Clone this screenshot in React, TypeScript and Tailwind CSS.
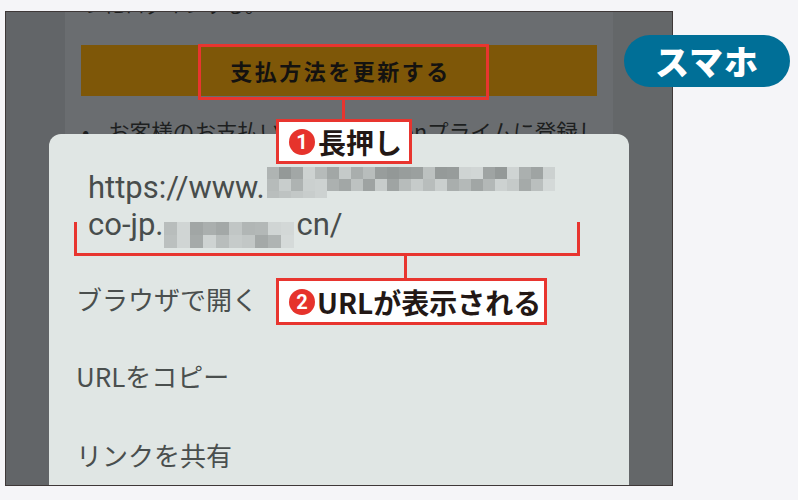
import React from "react";

const JP = { fontFamily: '"Noto Sans CJK JP", "Noto Sans", sans-serif' };
const RB = { fontFamily: 'Roboto, "Noto Sans CJK JP", sans-serif' };

function shade(seed: number) {
  const x = Math.sin(seed * 12.9898 + 78.233) * 43758.5453;
  return x - Math.floor(x);
}

function Blur({ rows, cols, cell, extra, seed, className }: { rows: number; cols: number; cell: number; extra?: number; seed: number; className: string }) {
  const cells: React.ReactNode[] = [];
  for (let r = 0; r < rows; r++) {
    for (let c = 0; c < cols; c++) {
      const v = shade(seed + r * 31 + c * 7);
      let g = 150 + Math.round(v * 62);
      if (c === cols - 1) g = 205 + Math.round(v * 12);
      const col = `rgb(${g - 3},${g + 2},${g + 1})`;
      cells.push(<span key={`${r}-${c}`} style={{ background: col, width: cell, height: cell }} className="block" />);
    }
  }
  return (
    <span className={`inline-block align-baseline ${className}`}>
      <span className="grid" style={{ gridTemplateColumns: `repeat(${cols}, ${cell}px)` }}>
        {cells}
      </span>
      {extra ? (
        <span className="flex">
          {Array.from({ length: extra }).map((_, i) => (
            <span key={i} className="block" style={{ width: cell, height: 7, background: `rgb(${185 + i * 5},${190 + i * 5},${189 + i * 5})` }} />
          ))}
        </span>
      ) : null}
    </span>
  );
}

function Num({ n }: { n: string }) {
  return (
    <span className="flex h-[26px] w-[26px] shrink-0 items-center justify-center rounded-full bg-[#e6332c] text-[20px] font-bold leading-none text-white" style={RB}>
      {n}
    </span>
  );
}

export default function App() {
  return (
    <div className="relative h-[500px] w-[798px] overflow-hidden bg-[#f5f5f8]">
      <div className="pl-[5px] pt-[11px]">
        <div className="relative h-[475px] w-[668px] overflow-hidden border border-[#3e3838] bg-[#646769]">
          <div className="flex h-full">
            <div className="w-[59px] shrink-0 bg-[#626568]" />
            <div className="flex w-[548px] shrink-0 flex-col bg-[#6a6d70] px-[16px]" style={JP}>
              <div className="mt-[-17px] pl-[4px] text-[20px] leading-[20px] text-[#1d1f20]">ンにログインする。</div>
              <div className="mt-[30px] flex h-[51px] items-center justify-center bg-[#7e5708] pl-[3px] text-[22px] font-bold tracking-[2.5px] text-[#141210]">
                支払方法を更新する
              </div>
              <div className="mt-[24px] flex items-start text-[21.6px] leading-[22px] text-[#1d1f20]">
                <span className="w-[27px] shrink-0 pl-[1px]">•</span>
                <span className="shrink-0 whitespace-nowrap">お客様のお支払い方法をAmazonプライムに登録し、</span>
              </div>
            </div>
            <div className="flex-1 bg-[#646769]" />
          </div>

          <div className="absolute bottom-0 left-[43px] top-[122px] w-[580px] rounded-t-[12px] bg-[#e0e6e4]">
            <div className="pl-[39px] pt-[33px] text-[31px] leading-[37px] text-[#484d4c]" style={RB}>
              <div className="whitespace-nowrap">
                https://www.
                <Blur rows={2} cols={24} cell={12} extra={5} seed={3} className="mb-[-10px] ml-[2px]" />
              </div>
              <div className="whitespace-nowrap">
                co-jp.
                <Blur rows={2} cols={10} cell={13} seed={11} className="mb-[-3px] ml-[1px] mr-[2px]" />
                cn/
              </div>
            </div>
            <div className="pl-[27px] text-[26px] leading-[26px] text-[#4a4f4e]" style={JP}>
              <div className="mt-[41px]">ブラウザで開く</div>
              <div className="mt-[51px]">URLをコピー</div>
              <div className="mt-[53px]">リンクを共有</div>
            </div>
          </div>
        </div>
      </div>

      {/* callouts */}
      <div className="absolute left-[198px] top-[44px] h-[56px] w-[291px] border-[3px] border-[#e8352f]" />
      <div className="absolute left-[342px] top-[100px] h-[19px] w-[3px] bg-[#e8352f]" />
      <div className="absolute left-[276px] top-[119px] flex h-[45px] w-[136px] items-center gap-[3px] border-[3px] border-[#e8352f] bg-white pl-[10px]" style={JP}>
        <Num n="1" />
        <span className="text-[28px] font-bold leading-none text-[#231815]">長押し</span>
      </div>

      <div className="absolute left-[74px] top-[222px] h-[34px] w-[506px] border-[3px] border-t-0 border-[#e8352f]" />
      <div className="absolute left-[404px] top-[256px] h-[22px] w-[3px] bg-[#e8352f]" />
      <div className="absolute left-[276px] top-[278px] flex h-[47px] w-[271px] items-center gap-[2px] border-[3px] border-[#e8352f] bg-white pl-[10px]" style={JP}>
        <Num n="2" />
        <span className="whitespace-nowrap text-[28px] font-bold leading-none text-[#231815]">URLが表示される</span>
      </div>

      <div className="absolute left-[624px] top-[35px] flex h-[52px] w-[166px] items-center justify-center rounded-full bg-[#006f97] text-[34px] font-black leading-none tracking-[1px] text-white" style={JP}>
        スマホ
      </div>
    </div>
  );
}
